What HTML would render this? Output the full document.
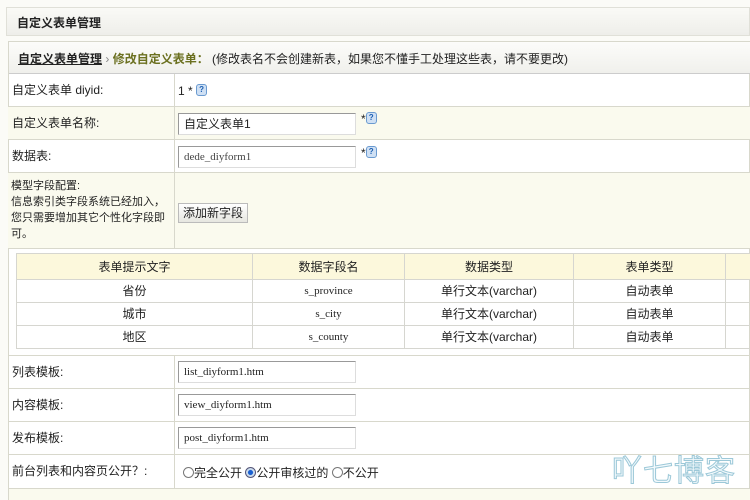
<!DOCTYPE html>
<html><head><meta charset="utf-8"><style>
*{margin:0;padding:0;box-sizing:border-box}
body{width:750px;height:500px;overflow:hidden;background:#fff;font-family:"Liberation Sans","Noto Sans CJK SC",sans-serif;font-size:12px;color:#222;position:relative}
.a{position:absolute}
.row{position:absolute;left:8px;width:742px;border-bottom:1px solid #d8d8cc}
.lab{position:absolute;left:4px;top:0;line-height:32px}
.sep{position:absolute;left:166px;top:0;bottom:0;border-left:1px solid #d8d8cc}
.inp{position:absolute;left:178px;width:178px;height:22px;border:1px solid #999;border-right-color:#ddd;border-bottom-color:#ddd;background:#fff;font-family:"Liberation Serif","Noto Serif CJK SC",serif;font-size:11px;line-height:20px;padding-left:5px}
.q{display:inline-block;width:11px;height:12px;border-radius:3px;background:#cfe0f4;border:1px solid #6a9ad0;color:#1b5fb2;font-size:8px;line-height:10px;text-align:center;font-weight:bold;vertical-align:top}
.y{background:#fafaee}
table{border-collapse:collapse;position:absolute;left:16px;top:253px;width:750px}
td{border:1px solid #d6d6d0;text-align:center;height:23px;font-size:12px;vertical-align:middle;line-height:14px}
td.m{font-family:"Liberation Serif","Noto Serif CJK SC",serif;font-size:11px}
.r{display:inline-block;width:11px;height:11px;border:1px solid #777;border-radius:50%;vertical-align:-1px;background:#fff}
</style></head><body>
<div class="a" style="left:0;top:0;width:750px;height:500px;background:#fbfbf7"></div>
<div class="a" style="left:6px;top:7px;width:744px;height:29px;background:linear-gradient(#fafaf6,#eeeeea);border:1px solid #e0e0d8"></div>
<div class="a" style="left:17px;top:14px;font-weight:bold;font-size:12px">自定义表单管理</div>
<div class="a" style="left:8px;top:41px;width:742px;height:459px;background:#fff;border:1px solid #d8d8cc"></div>
<div class="a" style="left:9px;top:42px;width:741px;height:32px;background:linear-gradient(#fcfcfa,#f0f0ec);border-bottom:1px solid #ccc"></div>
<div class="a" style="left:18px;top:50px;font-size:12px"><b style="text-decoration:underline;color:#222">自定义表单管理</b> <span style="color:#888">›</span> <b style="color:#6b7020">修改自定义表单：</b> (修改表名不会创建新表，如果您不懂手工处理这些表，请不要更改)</div>

<div class="row" style="top:74px;height:33px"><div class="lab">自定义表单 diyid:</div><div class="sep"></div><div class="a" style="left:170px;top:10px">1 * <span class="q">?</span></div></div>
<div class="row y" style="top:107px;height:33px"><div class="lab">自定义表单名称:</div><div class="sep"></div></div>
<div class="inp" style="top:113px;font-family:'Liberation Sans','Noto Sans CJK SC',sans-serif;font-size:12px">自定义表单1</div><div class="a" style="left:361px;top:112px">*<span class="q">?</span></div>
<div class="row" style="top:140px;height:33px"><div class="lab">数据表:</div><div class="sep"></div></div>
<div class="inp" style="top:146px;color:#444">dede_diyform1</div><div class="a" style="left:361px;top:146px">*<span class="q">?</span></div>
<div class="row y" style="top:173px;height:76px"><div class="a" style="left:3px;top:5px;line-height:16px;width:162px;font-size:11px">模型字段配置:<br>信息索引类字段系统已经加入，<br>您只需要增加其它个性化字段即<br>可。</div><div class="sep"></div>
<div class="a" style="left:170px;top:30px;height:20px;padding:0 4px;line-height:18px;background:linear-gradient(#fff,#e6e6e0);border:1px solid #bbb">添加新字段</div></div>
<table>
<tr style="background:#fcf8dc"><td style="width:236px;height:26px">表单提示文字</td><td style="width:152px">数据字段名</td><td style="width:169px">数据类型</td><td style="width:152px">表单类型</td><td></td></tr>
<tr><td>省份</td><td class="m">s_province</td><td>单行文本(varchar)</td><td>自动表单</td><td></td></tr>
<tr><td>城市</td><td class="m">s_city</td><td>单行文本(varchar)</td><td>自动表单</td><td></td></tr>
<tr><td>地区</td><td class="m">s_county</td><td>单行文本(varchar)</td><td>自动表单</td><td></td></tr>
</table>
<div class="a" style="left:8px;top:355px;width:742px;border-top:1px solid #d8d8cc"></div>
<div class="row" style="top:356px;height:33px"><div class="lab">列表模板:</div><div class="sep"></div></div>
<div class="inp" style="top:361px">list_diyform1.htm</div>
<div class="row" style="top:389px;height:33px"><div class="lab">内容模板:</div><div class="sep"></div></div>
<div class="inp" style="top:394px">view_diyform1.htm</div>
<div class="row" style="top:422px;height:33px"><div class="lab">发布模板:</div><div class="sep"></div></div>
<div class="inp" style="top:427px">post_diyform1.htm</div>
<div class="row" style="top:455px;height:34px"><div class="lab" style="line-height:32px">前台列表和内容页公开？:</div><div class="sep"></div>
<div class="a" style="left:175px;top:9px"><span class="r"></span>完全公开 <span class="r" style="background:radial-gradient(#1a5fd0 35%,#cde 45%);border-color:#557"></span>公开审核过的 <span class="r"></span>不公开</div></div>
<div class="a" style="left:9px;top:489px;width:741px;height:11px;background:#fafaee"></div>
<div class="a" style="left:612px;top:446px;font-size:30px;color:#f2f9fc;-webkit-text-stroke:1px #9cc8d8;letter-spacing:1px">吖七博客</div>
</body></html>
